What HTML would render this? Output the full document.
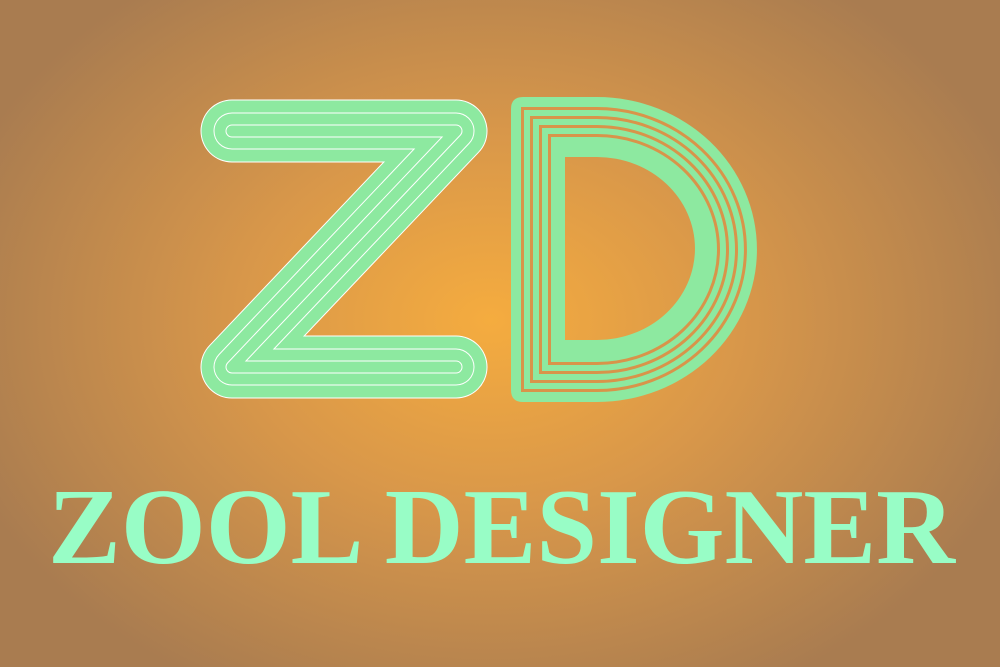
<!DOCTYPE html>
<html><head><meta charset="utf-8"><style>
html,body{margin:0;padding:0;width:1000px;height:667px;overflow:hidden}
body{background:radial-gradient(ellipse 560px 420px at 490px 320px,#f5ac3f 0%,#d8974a 45%,#a97c50 100%)}
svg{position:absolute;left:0;top:0}
</style></head><body>
<svg width="1000" height="667" viewBox="0 0 1000 667">
<g fill="none" stroke-linecap="round" stroke-linejoin="round">
<path d="M232,131 H456 L232,367 H456" stroke="#fff" stroke-width="63"/>
<path d="M232,131 H456 L232,367 H456" stroke="#8de9a0" stroke-width="61"/>
<path d="M232,131 H456 L232,367 H456" stroke="#fff" stroke-width="37"/>
<path d="M232,131 H456 L232,367 H456" stroke="#8de9a0" stroke-width="35"/>
<path d="M232,131 H456 L232,367 H456" stroke="#fff" stroke-width="13"/>
<path d="M232,131 H456 L232,367 H456" stroke="#8de9a0" stroke-width="11"/>
</g>
<path fill="#8de9a0" fill-rule="evenodd" d="M523,97 H597 A160,152.5 0 0 1 597,402 H523 Q511,402 511,390 V109 Q511,97 523,97 Z M565,157 V340 H597 A98,91.5 0 0 0 597,157 Z"/>
<g fill="none" stroke="#d8944a" stroke-width="3">
<path d="M522.5,108.5 H597 A148.5,141 0 0 1 597,390.5 H522.5 Z"/>
<path d="M531.5,117.5 H597 A139.5,132 0 0 1 597,381.5 H531.5 Z"/>
<path d="M540.5,126.5 H597 A130.5,123 0 0 1 597,372.5 H540.5 Z"/>
<path d="M549.5,135.5 H597 A121.5,114 0 0 1 597,363.5 H549.5 Z"/>
</g>
<text x="48" y="563" textLength="907" lengthAdjust="spacingAndGlyphs" font-family="Liberation Serif, serif" font-weight="bold" font-size="108" fill="#98fdc6">ZOOL DESIGNER</text>
</svg>
</body></html>
